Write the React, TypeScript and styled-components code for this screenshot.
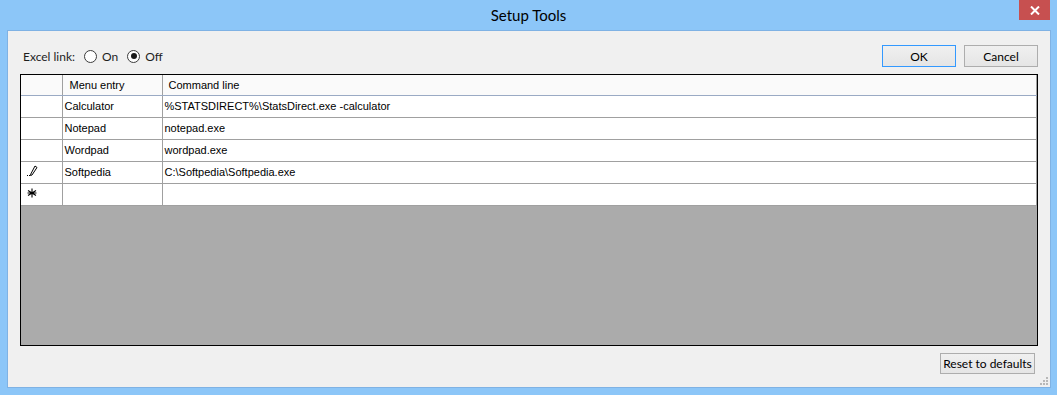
import React from 'react';
import styled, {createGlobalStyle} from "styled-components";

const GlobalStyle = createGlobalStyle`
  html, body {
    margin: 0;
    padding: 0;
    background: #8cc6f8;
  }
`
const Window = styled.div`
  width: 1057px;
  height: 395px;
  display: flex;
  flex-direction: column;
  background: #8cc6f8;
  font-family: Lato, "Noto Sans", sans-serif;
  box-sizing: border-box;
`
const TitleBar = styled.div`
  position: relative;
  height: 30px;
  display: flex;
  align-items: center;
  justify-content: center;
  font-size: 15px;
  color: #000;
  padding-bottom: 1px;
  box-sizing: border-box;
`
const CloseButton = styled.div`
  position: absolute;
  top: 0;
  right: 7px;
  width: 31px;
  height: 20px;
  background: #c75050;
  display: flex;
  align-items: center;
  justify-content: center;
`
const Client = styled.div`
  flex: 1;
  margin: 0 6px 7px 7px;
  border: 1px solid #7fb2e4;
  background: #f0f0f0;
  display: flex;
  flex-direction: column;
  padding: 14px 12px 13px 12px;
  position: relative;
`
const TopRow = styled.div`
  display: flex;
  align-items: center;
  justify-content: space-between;
  height: 22px;
  margin-bottom: 7px;
`
const LinkGroup = styled.div`
  display: flex;
  align-items: center;
  font-size: 12px;
  color: #1e1e1e;
  padding-left: 3px;
`
const Radio = styled.span<{checked?: boolean}>`
  width: 11px;
  height: 11px;
  border-radius: 50%;
  border: 1px solid #3c3c3c;
  background: #fff;
  margin: 0 5px 0 0;
  display: inline-flex;
  align-items: center;
  justify-content: center;
  &::after {
    content: "";
    width: 6px;
    height: 6px;
    border-radius: 50%;
    background: ${p => p.checked ? '#1a1a1a' : 'transparent'};
  }
`
const RadioOption = styled.label`
  display: flex;
  align-items: center;
  margin-left: 9px;
`
const Buttons = styled.div`
  display: flex;
  gap: 8px;
`
const Button = styled.button<{focused?: boolean}>`
  width: 74px;
  height: 22px;
  font-family: Lato, "Noto Sans", sans-serif;
  font-size: 12px;
  color: #000;
  border: 1px solid ${p => p.focused ? '#3399ff' : '#adadad'};
  background: linear-gradient(#f0f0f0, #e5e5e5);
  padding: 0;
  white-space: nowrap;
`
const Grid = styled.div`
  flex: 1;
  border: 1px solid #000;
  background: #ababab;
  display: flex;
  flex-direction: column;
  overflow: hidden;
`
const Table = styled.table`
  border-collapse: collapse;
  width: 100%;
  table-layout: fixed;
  font-family: "Liberation Sans", Arial, sans-serif;
  font-size: 11px;
  background: #fff;
`
const HeadCell = styled.th<{w?: number}>`
  width: ${p => p.w ? `${p.w}px` : 'auto'};
  height: 20px;
  font-weight: normal;
  text-align: left;
  padding: 0 0 0 6px;
  background: #fafafa;
  border-right: 1px solid #a0a0a0;
  border-bottom: 1px solid #9aaac4;
  box-sizing: border-box;
`
const RowHead = styled.td`
  height: 21px;
  border-right: 1px solid #a0a0a0;
  border-bottom: 1px solid #a0a0a0;
  background: #fff;
  padding: 0 0 0 6px;
  box-sizing: border-box;
`
const Cell = styled.td`
  height: 21px;
  border-right: 1px solid #a0a0a0;
  border-bottom: 1px solid #a0a0a0;
  padding: 0 0 0 2px;
  color: #000;
  white-space: nowrap;
  overflow: hidden;
`
const BottomRow = styled.div`
  display: flex;
  justify-content: flex-end;
  margin-top: 7px;
  padding-right: 3px;
`
const ResetButton = styled(Button)`
  width: 95px;
  height: 21px;
`
const Grip = styled.svg`
  position: absolute;
  right: 2px;
  bottom: 2px;
`

const rows = [
    {name: 'Calculator', cmd: '%STATSDIRECT%\\StatsDirect.exe -calculator'},
    {name: 'Notepad', cmd: 'notepad.exe'},
    {name: 'Wordpad', cmd: 'wordpad.exe'},
    {name: 'Softpedia', cmd: 'C:\\Softpedia\\Softpedia.exe', editing: true},
]

const Pencil = () => (
    <svg width="12" height="12" viewBox="0 0 12 12">
        <path d="M8 1 L10 2.5 L5 10 L3.5 10.5 L3.8 9 Z" fill="none" stroke="#000" strokeWidth="1"/>
        <rect x="0" y="10" width="1" height="1" fill="#000"/>
        <rect x="2" y="10" width="1" height="1" fill="#000"/>
    </svg>
)
const Star = () => (
    <svg width="10" height="10" viewBox="0 0 10 10">
        <path d="M5 0.5 V9.5 M1 2.5 L9 7.5 M9 2.5 L1 7.5 M0.5 5 H9.5" stroke="#000" strokeWidth="1.1"/>
    </svg>
)

const App: React.FC = () => {
    return (
        <Window>
            <GlobalStyle/>
            <TitleBar>
                Setup Tools
                <CloseButton>
                    <svg width="10" height="9" viewBox="0 0 10 9">
                        <path d="M1 0.5 L9 8.5 M9 0.5 L1 8.5" stroke="#fff" strokeWidth="2"/>
                    </svg>
                </CloseButton>
            </TitleBar>
            <Client>
                <TopRow>
                    <LinkGroup>
                        Excel link:
                        <RadioOption><Radio/>On</RadioOption>
                        <RadioOption><Radio checked/>Off</RadioOption>
                    </LinkGroup>
                    <Buttons>
                        <Button focused>OK</Button>
                        <Button>Cancel</Button>
                    </Buttons>
                </TopRow>
                <Grid>
                    <Table>
                        <thead>
                        <tr>
                            <HeadCell w={41}></HeadCell>
                            <HeadCell w={100} style={{paddingLeft: 7}}>Menu entry</HeadCell>
                            <HeadCell>Command line</HeadCell>
                        </tr>
                        </thead>
                        <tbody>
                        {rows.map(r => (
                            <tr key={r.name}>
                                <RowHead>{r.editing && <Pencil/>}</RowHead>
                                <Cell>{r.name}</Cell>
                                <Cell>{r.cmd}</Cell>
                            </tr>
                        ))}
                        <tr>
                            <RowHead><Star/></RowHead>
                            <Cell></Cell>
                            <Cell></Cell>
                        </tr>
                        </tbody>
                    </Table>
                </Grid>
                <BottomRow>
                    <ResetButton>Reset to defaults</ResetButton>
                </BottomRow>
                <Grip width="10" height="10" viewBox="0 0 10 10">
                    {[[8, 0], [8, 3], [8, 6], [5, 3], [5, 6], [2, 6]].map(([x, y]) => (
                        <rect key={`${x}-${y}`} x={x} y={y + 2} width="2" height="2" fill="#b8b8b8"/>
                    ))}
                </Grip>
            </Client>
        </Window>
    );
};

export default App;
